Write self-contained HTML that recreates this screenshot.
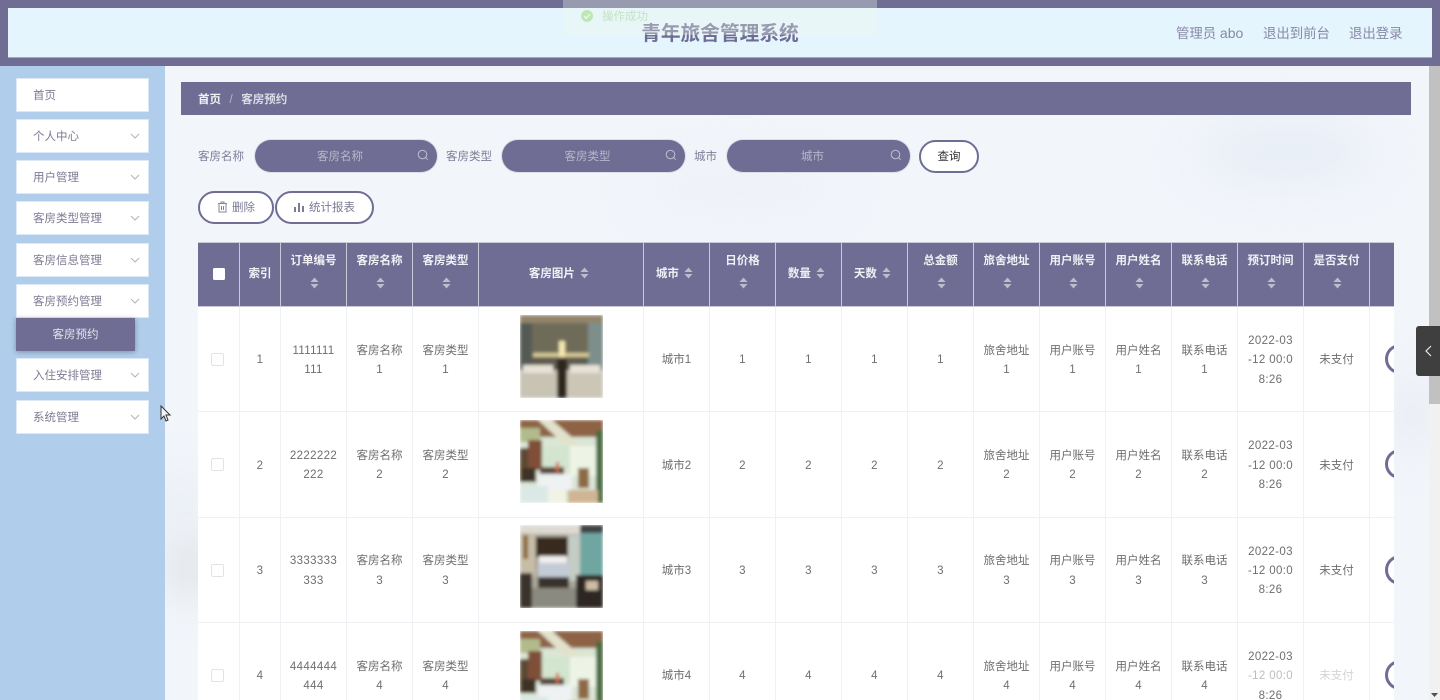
<!DOCTYPE html>
<html lang="zh">
<head>
<meta charset="utf-8">
<title>青年旅舍管理系统</title>
<style>
*{box-sizing:border-box}
html,body{margin:0;padding:0;width:1440px;height:700px;overflow:hidden}
body{position:relative;background:#f2f5fa;font-family:"Liberation Sans","Noto Sans CJK SC",sans-serif;font-size:11.5px;color:#666}
.a{position:absolute}
.blob{position:absolute;border-radius:50%;filter:blur(22px)}
.top{left:0;top:0;width:1440px;height:66px;background:#6f6d93}
.inner{left:8px;top:8px;width:1424px;height:50px;background:#e5f5fe;border-bottom:1px solid #a6a5bf}
.title{left:620px;width:200px;top:20px;text-align:center;font-size:19.7px;line-height:28px;font-weight:bold;color:#6f6d93;white-space:nowrap}
.lnk{top:23.5px;font-size:13.4px;line-height:20px;color:#8788a5;white-space:nowrap}
.toast{left:563px;top:0;width:314px;height:35px;background:rgba(240,249,235,.32);}
.side{left:0;top:66px;width:165px;height:634px;background:#b0cdeb}
.mi{position:absolute;left:16px;width:133px;height:34px;background:#fff;border:1px solid #dbe8f5;line-height:34px;padding-left:16px;color:#7c7b93;font-size:11.5px}
.mi svg{position:absolute;left:113px;top:13px}
.sub{left:16px;top:318px;width:119px;height:33px;background:#6f6d93;color:#e4e4ec;line-height:35px;text-align:center;font-size:11.5px;box-shadow:0 1px 5px rgba(0,0,0,.3)}
.bc{left:181px;top:82px;width:1230px;height:33px;background:#6f6d93;color:#f1f1f5;line-height:36px;padding-left:17px;font-size:11.5px}
.lb{top:149px;line-height:17px;color:#7f7e98;font-size:11.5px;white-space:nowrap}
.pill{top:140px;height:32px;border-radius:16px;background:#6f6d93;color:#b8b7c9;text-align:center;line-height:34px;font-size:11.5px;padding-right:12px;box-shadow:0 0 0 1px #dcdde8}
.pill svg{position:absolute;right:8px;top:9px}
.btn{height:33px;border:2.5px solid #6f6d93;border-radius:17px;background:#fff;text-align:center;font-size:11.5px;color:#7c7b93;white-space:nowrap}
.wrap{left:198px;top:242px;width:1196px;height:458px;overflow:hidden;background:#fff}
table{border-collapse:separate;border-spacing:0;table-layout:fixed;width:1272px}
th{background:#6f6d93;color:#f0f0f5;font-weight:bold;height:65px;border-right:1px solid #c9c9d8;border-top:1px solid #c9c9d8;border-bottom:1px solid #c9c9d8;text-align:center;padding:0;font-size:11.5px;line-height:23px;vertical-align:middle}
th.w{padding-bottom:3px}
td{height:105.3px;border-right:1px solid #f0f1f4;border-bottom:1px solid #eef0f3;text-align:center;padding:4px 9px 0;font-size:11.5px;line-height:19.4px;color:#6e6e6e;background:#fff;vertical-align:middle;word-break:break-all}
td.n{letter-spacing:.35px;padding:4px 0 0;white-space:nowrap;word-break:normal}
td.i{padding:0 9px 6px}
td.c{padding:2px 0 0}
td.o{padding:0}
.ca{display:inline-block;vertical-align:-2px;margin-left:1px}
.cb{display:inline-block;vertical-align:-2px;margin-left:2px;margin-right:4px}
.ck{display:inline-block;width:13px;height:13px;border:1px solid #e2e3e6;border-radius:2px;background:#fff;vertical-align:middle;margin-left:-2px}
.ckh{display:inline-block;width:12px;height:12px;background:#fff;border-radius:1.5px;vertical-align:middle}
.op{display:block;width:60px;height:30px;border:3px solid #6f6d93;border-radius:15px;margin-left:15px}
.ph{display:block;margin:0 auto}
.sb{left:1429px;top:66px;width:11px;height:634px;background:#f1f1f1}
.th{left:1429px;top:66px;width:11px;height:338px;background:#c1c1c1}
.hd{left:1416px;top:326px;width:24px;height:50px;background:#3f3f3f;border-radius:3px 0 0 3px}
</style>
</head>
<body>
<svg width="0" height="0" style="position:absolute">
<defs>
<filter id="bl" x="0" y="0" width="100%" height="100%"><feGaussianBlur stdDeviation="1.6" edgeMode="duplicate"/></filter>
<symbol id="r1" viewBox="0 0 83 83">
<g filter="url(#bl)">
<rect width="83" height="83" fill="#5d5c4e"/>
<rect width="83" height="8" fill="#93856a"/>
<rect x="0" y="8" width="12" height="48" fill="#555a54"/>
<rect x="12" y="8" width="56" height="30" fill="#6e6c58"/>
<rect x="68" y="8" width="15" height="48" fill="#7d8e8b"/>
<rect x="13" y="38" width="56" height="4" fill="#d8cb98"/>
<rect x="39" y="26" width="6" height="16" fill="#f6e7b2"/>
<rect x="0" y="55" width="37" height="28" fill="#c8c3b3"/>
<rect x="47" y="55" width="36" height="28" fill="#cbc6b6"/>
<rect x="37" y="44" width="10" height="39" fill="#2d261c"/>
<rect x="3" y="50" width="30" height="8" fill="#e6e2d8"/>
<rect x="50" y="50" width="30" height="8" fill="#e6e2d8"/>
</g>
</symbol>
<symbol id="r2" viewBox="0 0 83 83">
<g filter="url(#bl)">
<rect width="83" height="83" fill="#dbe6d6"/>
<rect y="0" width="83" height="17" fill="#8e6344"/>
<polygon points="18,0 32,0 62,26 46,26" fill="#e2e2cc"/>
<rect x="0" y="8" width="20" height="14" fill="#b2bb8c"/>
<rect x="8" y="20" width="14" height="30" fill="#7f4f38"/>
<rect x="0" y="28" width="8" height="34" fill="#5c4a36"/>
<rect x="22" y="26" width="28" height="24" fill="#d3e5cf"/>
<rect x="50" y="26" width="26" height="30" fill="#edf4e6"/>
<rect x="76" y="10" width="7" height="73" fill="#4b6a42"/>
<rect x="2" y="48" width="14" height="14" fill="#3e3228"/>
<rect x="18" y="54" width="34" height="16" fill="#eef2f2"/>
<rect x="20" y="47" width="24" height="7" fill="#5b4a3a"/>
<rect x="0" y="66" width="28" height="17" fill="#dbe9e6"/>
<rect x="28" y="70" width="18" height="13" fill="#f2f3e4"/>
<rect x="48" y="70" width="30" height="13" fill="#cfb594"/>
<rect x="58" y="48" width="11" height="20" fill="#8d6b42"/>
<rect x="36" y="42" width="3" height="10" fill="#d36a4a"/>
</g>
</symbol>
<symbol id="r3" viewBox="0 0 83 83">
<g filter="url(#bl)">
<rect width="83" height="83" fill="#a8a69a"/>
<rect width="60" height="9" fill="#dedad3"/>
<rect x="60" width="23" height="8" fill="#3c4342"/>
<rect x="0" y="8" width="15" height="44" fill="#c7bda7"/>
<rect x="3" y="10" width="5" height="24" fill="#8d6a3f"/>
<rect x="16" y="12" width="32" height="20" fill="#38291f"/>
<rect x="48" y="10" width="12" height="46" fill="#c4ccc4"/>
<rect x="60" y="8" width="23" height="44" fill="#6fa6a2"/>
<rect x="19" y="31" width="28" height="7" fill="#f0eeee"/>
<rect x="18" y="38" width="31" height="14" fill="#c3cbd6"/>
<rect x="18" y="52" width="31" height="11" fill="#37312c"/>
<rect x="0" y="48" width="12" height="35" fill="#3a3029"/>
<rect x="56" y="50" width="27" height="33" fill="#2f2722"/>
<rect x="12" y="63" width="44" height="20" fill="#8b8a80"/>
<rect x="66" y="56" width="12" height="9" fill="#cdbda6"/>
</g>
</symbol>
<symbol id="sort" viewBox="0 0 9 12">
<polygon points="4.5,0.5 8.500,5 0.500,5" fill="#bcbccd"/>
<polygon points="4.5,11.5 8.500,7 0.500,7" fill="#bcbccd"/>
</symbol>
<symbol id="chev" viewBox="0 0 10 6"><path d="M1 1l4 4 4-4" fill="none" stroke="#b3b3c0" stroke-width="1"/></symbol>
<symbol id="mag" viewBox="0 0 12 12"><circle cx="5.5" cy="5.5" r="4.3" fill="none" stroke="#c0bfd0" stroke-width="1"/><path d="M8.700 8.700l2 2" stroke="#c0bfd0" stroke-width="1"/></symbol>
</defs>
</svg>

<div class="blob" style="left:1200px;top:125px;width:170px;height:55px;background:#e6edf6"></div>
<div class="blob" style="left:166px;top:540px;width:50px;height:55px;background:#dcdfe2"></div>
<div class="blob" style="left:166px;top:480px;width:30px;height:40px;background:#e1e8ee"></div>
<div class="blob" style="left:1400px;top:380px;width:26px;height:70px;background:#e2e6ee"></div>
<div class="blob" style="left:640px;top:170px;width:200px;height:40px;background:#edf0f7"></div>

<div class="a top"></div>
<div class="a inner"></div>
<div class="a title">青年旅舍管理系统</div>
<div class="a lnk" style="left:1176px">管理员 <span style="font-size:14px;line-height:18px">abo</span></div>
<div class="a lnk" style="left:1263px">退出到前台</div>
<div class="a lnk" style="left:1349px">退出登录</div>
<div class="a toast"></div>
<svg class="a" style="left:581px;top:10px" width="12" height="12" viewBox="0 0 12 12"><circle cx="6" cy="6" r="6" fill="#bfe6b8"/><path d="M3.200 6.200l2 2 3.600-3.800" fill="none" stroke="#eef8ec" stroke-width="1.300"/></svg>
<div class="a" style="left:602px;top:9px;line-height:17px;font-size:11.5px;color:#c3e3c5;white-space:nowrap">操作成功</div>

<div class="a side"></div>
<div class="mi" style="top:78px">首页</div>
<div class="mi" style="top:119px">个人中心<svg width="10" height="6"><use href="#chev"/></svg></div>
<div class="mi" style="top:160px">用户管理<svg width="10" height="6"><use href="#chev"/></svg></div>
<div class="mi" style="top:201px">客房类型管理<svg width="10" height="6"><use href="#chev"/></svg></div>
<div class="mi" style="top:243px">客房信息管理<svg width="10" height="6"><use href="#chev"/></svg></div>
<div class="mi" style="top:284px">客房预约管理<svg width="10" height="6"><use href="#chev"/></svg></div>
<div class="a sub">客房预约</div>
<div class="mi" style="top:358px">入住安排管理<svg width="10" height="6"><use href="#chev"/></svg></div>
<div class="mi" style="top:400px">系统管理<svg width="10" height="6"><use href="#chev"/></svg></div>
<svg class="a" style="left:160px;top:405px" width="12" height="17" viewBox="0 0 12 17"><path d="M1 1v13l3-3 2 5 2-1-2-5h4z" fill="#f4f6fa" stroke="#333" stroke-width="1"/></svg>

<div class="a bc"><b>首页</b><span style="color:#b9b8cb;margin:0 8.500px">/</span><b style="color:#dcdce6">客房预约</b></div>

<div class="a lb" style="left:198px">客房名称</div>
<div class="a pill" style="left:255px;width:182px">客房名称<svg width="12" height="12"><use href="#mag"/></svg></div>
<div class="a lb" style="left:446px">客房类型</div>
<div class="a pill" style="left:502px;width:183px">客房类型<svg width="12" height="12"><use href="#mag"/></svg></div>
<div class="a lb" style="left:694px">城市</div>
<div class="a pill" style="left:727px;width:183px">城市<svg width="12" height="12"><use href="#mag"/></svg></div>
<div class="a btn" style="left:919px;top:140px;width:60px;line-height:30px;color:#333">查询</div>

<div class="a btn" style="left:198px;top:191px;width:76px;line-height:30px"><svg width="11" height="12" viewBox="0 0 11 12" style="vertical-align:-2px;margin-right:4px"><path d="M1 2.500h9M4 2.500V1h3v1.500M2 2.500V11h7V2.500M4.500 5v4M6.500 5v4" fill="none" stroke="#85849d" stroke-width="1"/></svg>删除</div>
<div class="a btn" style="left:275px;top:191px;width:99px;line-height:30px"><svg width="10" height="9" viewBox="0 0 10 9" style="vertical-align:-0.500px;margin-right:5px"><path d="M0 4h2v5H0zM4 0h2v9H4zM8 3h2v6H8z" fill="#7c7b93"/></svg>统计报表</div>

<div class="a wrap">
<table>
<colgroup><col style="width:42px"><col style="width:41px"><col style="width:66px"><col style="width:66px"><col style="width:66px"><col style="width:165px"><col style="width:66px"><col style="width:66px"><col style="width:66px"><col style="width:66px"><col style="width:66px"><col style="width:66px"><col style="width:66px"><col style="width:66px"><col style="width:66px"><col style="width:66px"><col style="width:66px"><col style="width:100px"></colgroup>
<thead><tr>
<th><span class="ckh"></span></th>
<th>索引</th>
<th class="w">订单编号<br><svg class="ca" width="9" height="12"><use href="#sort"/></svg></th>
<th class="w">客房名称<br><svg class="ca" width="9" height="12"><use href="#sort"/></svg></th>
<th class="w">客房类型<br><svg class="ca" width="9" height="12"><use href="#sort"/></svg></th>
<th>客房图片 <svg class="cb" width="9" height="12"><use href="#sort"/></svg></th>
<th>城市 <svg class="cb" width="9" height="12"><use href="#sort"/></svg></th>
<th class="w">日价格<br><svg class="ca" width="9" height="12"><use href="#sort"/></svg></th>
<th>数量 <svg class="cb" width="9" height="12"><use href="#sort"/></svg></th>
<th>天数 <svg class="cb" width="9" height="12"><use href="#sort"/></svg></th>
<th class="w">总金额<br><svg class="ca" width="9" height="12"><use href="#sort"/></svg></th>
<th class="w">旅舍地址<br><svg class="ca" width="9" height="12"><use href="#sort"/></svg></th>
<th class="w">用户账号<br><svg class="ca" width="9" height="12"><use href="#sort"/></svg></th>
<th class="w">用户姓名<br><svg class="ca" width="9" height="12"><use href="#sort"/></svg></th>
<th class="w">联系电话<br><svg class="ca" width="9" height="12"><use href="#sort"/></svg></th>
<th class="w">预订时间<br><svg class="ca" width="9" height="12"><use href="#sort"/></svg></th>
<th class="w">是否支付<br><svg class="ca" width="9" height="12"><use href="#sort"/></svg></th>
<th></th>
</tr></thead>
<tbody>
<tr>
<td class="c"><span class="ck"></span></td><td class="n">1</td><td class="n">1111111<br>111</td><td>客房名称<br>1</td><td>客房类型<br>1</td>
<td class="i"><svg class="ph" width="83" height="83"><use href="#r1"/></svg></td>
<td>城市1</td><td class="n">1</td><td class="n">1</td><td class="n">1</td><td class="n">1</td><td>旅舍地址<br>1</td><td>用户账号<br>1</td><td>用户姓名<br>1</td><td>联系电话<br>1</td><td class="n">2022-03<br>-12 00:0<br>8:26</td><td>未支付</td>
<td class="o"><span class="op"></span></td>
</tr>
<tr>
<td class="c"><span class="ck"></span></td><td class="n">2</td><td class="n">2222222<br>222</td><td>客房名称<br>2</td><td>客房类型<br>2</td>
<td class="i"><svg class="ph" width="83" height="83"><use href="#r2"/></svg></td>
<td>城市2</td><td class="n">2</td><td class="n">2</td><td class="n">2</td><td class="n">2</td><td>旅舍地址<br>2</td><td>用户账号<br>2</td><td>用户姓名<br>2</td><td>联系电话<br>2</td><td class="n">2022-03<br>-12 00:0<br>8:26</td><td>未支付</td>
<td class="o"><span class="op"></span></td>
</tr>
<tr>
<td class="c"><span class="ck"></span></td><td class="n">3</td><td class="n">3333333<br>333</td><td>客房名称<br>3</td><td>客房类型<br>3</td>
<td class="i"><svg class="ph" width="83" height="83"><use href="#r3"/></svg></td>
<td>城市3</td><td class="n">3</td><td class="n">3</td><td class="n">3</td><td class="n">3</td><td>旅舍地址<br>3</td><td>用户账号<br>3</td><td>用户姓名<br>3</td><td>联系电话<br>3</td><td class="n">2022-03<br>-12 00:0<br>8:26</td><td>未支付</td>
<td class="o"><span class="op"></span></td>
</tr>
<tr>
<td class="c"><span class="ck"></span></td><td class="n">4</td><td class="n">4444444<br>444</td><td>客房名称<br>4</td><td>客房类型<br>4</td>
<td class="i"><svg class="ph" width="83" height="83"><use href="#r2"/></svg></td>
<td>城市4</td><td class="n">4</td><td class="n">4</td><td class="n">4</td><td class="n">4</td><td>旅舍地址<br>4</td><td>用户账号<br>4</td><td>用户姓名<br>4</td><td>联系电话<br>4</td><td class="n">2022-03<br><span style="opacity:.45">-12 00:0</span><br>8:26</td><td><span style="opacity:.3">未支付</span></td>
<td class="o"><span class="op"></span></td>
</tr>
</tbody>
</table>
</div>

<div class="a sb"></div>
<div class="a th"></div>
<svg class="a" style="left:1431px;top:693px" width="7" height="5"><polygon points="0,0 7,0 3.500,4" fill="#505050"/></svg>
<div class="a hd"><svg width="24" height="50"><path d="M15 20l-5 5 5 5" fill="none" stroke="#e8e8e8" stroke-width="1.200"/></svg></div>
</body>
</html>
